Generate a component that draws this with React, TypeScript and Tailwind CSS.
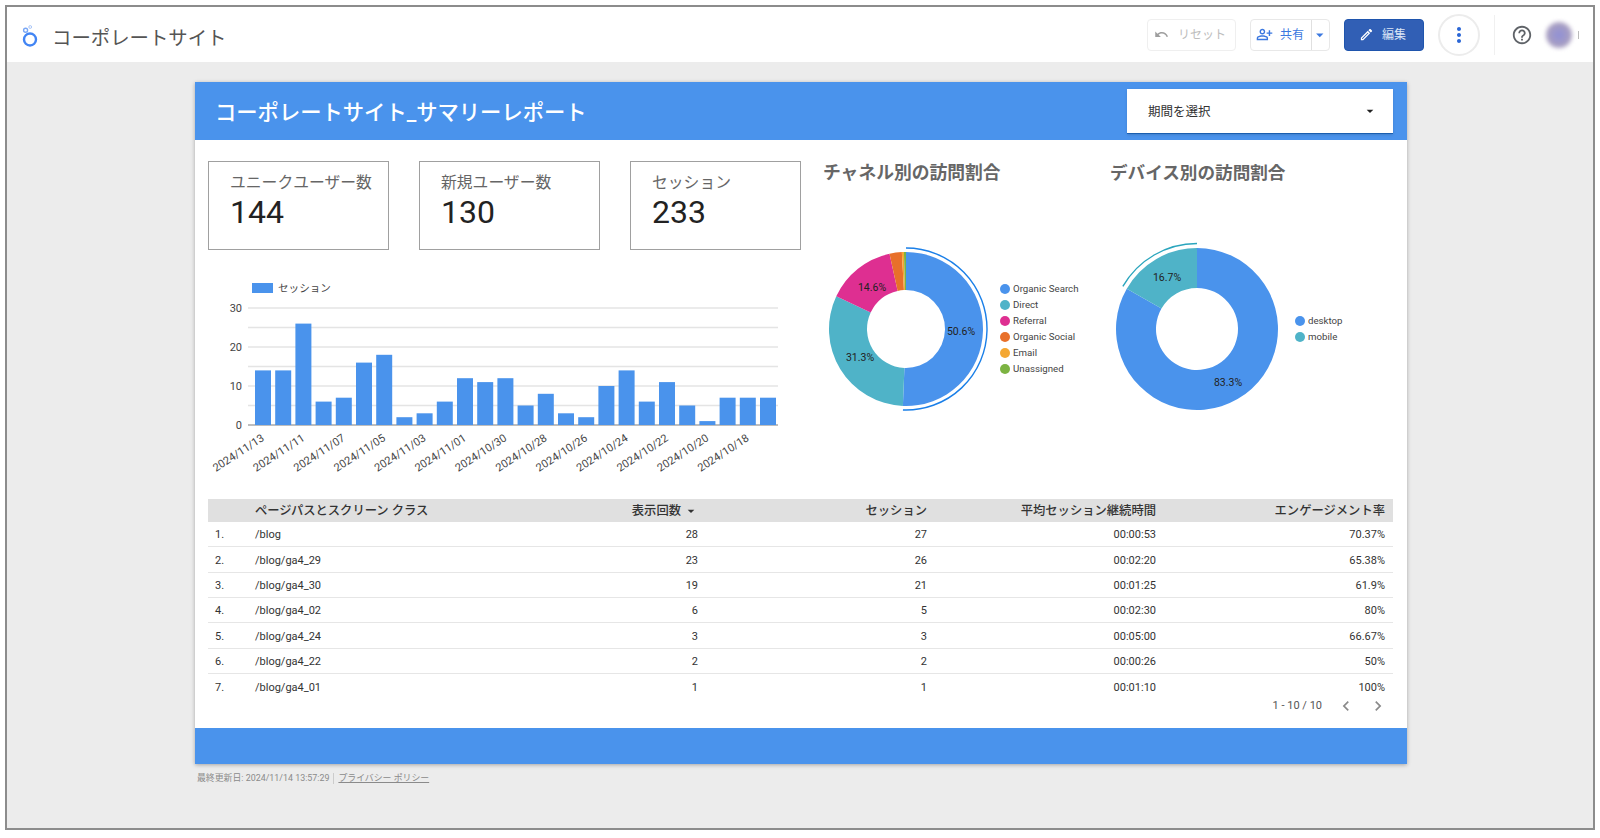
import { MdHelpOutline, MdMoreVert, MdOutlineEdit, MdOutlinePersonAddAlt, MdArrowDropDown, MdChevronLeft, MdChevronRight } from 'react-icons/md';

const BLUE = '#4a93ec';

const bars = [14, 14, 26, 6, 7, 16, 18, 2, 3, 6, 12, 11, 12, 5, 8, 3, 2, 10, 14, 6, 11, 5, 1, 7, 7, 7];
const dates = ['11/13', '11/11', '11/07', '11/05', '11/03', '11/01', '10/30', '10/28', '10/26', '10/24', '10/22', '10/20', '10/18'];

const rows = [
  ['/blog', '28', '27', '00:00:53', '70.37%'],
  ['/blog/ga4_29', '23', '26', '00:02:20', '65.38%'],
  ['/blog/ga4_30', '19', '21', '00:01:25', '61.9%'],
  ['/blog/ga4_02', '6', '5', '00:02:30', '80%'],
  ['/blog/ga4_24', '3', '3', '00:05:00', '66.67%'],
  ['/blog/ga4_22', '2', '2', '00:00:26', '50%'],
  ['/blog/ga4_01', '1', '1', '00:01:10', '100%'],
];

const channels = [
  { name: 'Organic Search', value: 118, color: BLUE },
  { name: 'Direct', value: 73, color: '#4fb3c8' },
  { name: 'Referral', value: 34, color: '#de2f91' },
  { name: 'Organic Social', value: 6, color: '#e8702a' },
  { name: 'Email', value: 1, color: '#f4a732' },
  { name: 'Unassigned', value: 1, color: '#7cb342' },
];

const devices = [
  { name: 'desktop', value: 83.3, color: BLUE },
  { name: 'mobile', value: 16.7, color: '#4fb3c8' },
];

const point = (cx: number, cy: number, r: number, turn: number) => {
  const a = turn * Math.PI * 2;
  return `${cx + r * Math.sin(a)} ${cy - r * Math.cos(a)}`;
};

const sector = (cx: number, cy: number, r: number, inner: number, from: number, to: number) => {
  const large = to - from > 0.5 ? 1 : 0;
  return `M${point(cx, cy, r, from)} A${r} ${r} 0 ${large} 1 ${point(cx, cy, r, to)} L${point(cx, cy, inner, to)} A${inner} ${inner} 0 ${large} 0 ${point(cx, cy, inner, from)} Z`;
};

const arc = (cx: number, cy: number, r: number, from: number, to: number) =>
  `M${point(cx, cy, r, from)} A${r} ${r} 0 ${to - from > 0.5 ? 1 : 0} 1 ${point(cx, cy, r, to)}`;

type Slice = { name: string; value: number; color: string };
type Label = { text: string; x: number; y: number };

const Donut = ({ data, w, cx, r, inner, labels, hover }: { data: Slice[]; w: number; cx: number; r: number; inner: number; labels: Label[]; hover: { r: number; from: number; to: number; color: string } }) => {
  const total = data.reduce((s, d) => s + d.value, 0);
  let run = 0;
  return (
    <svg width={w} height={258} className="shrink-0">
      {data.map((d) => {
        const from = run / total;
        run += d.value;
        return <path key={d.name} d={sector(cx, 129, r, inner, from, run / total)} fill={d.color} />;
      })}
      <path d={arc(cx, 129, hover.r, hover.from, hover.to)} fill="none" stroke={hover.color} strokeWidth={1.4} />
      {labels.map((l) => (
        <text key={l.text} x={l.x} y={l.y} textAnchor="middle" dominantBaseline="central" fontSize={10.5} fill="#222">{l.text}</text>
      ))}
    </svg>
  );
};

const Legend = ({ data }: { data: Slice[] }) => (
  <div className="flex flex-col justify-center">
    {data.map((d) => (
      <div key={d.name} className="flex h-4 items-center gap-[3px] text-[9.7px] text-[#444]">
        <span className="h-[10px] w-[10px] rounded-full" style={{ backgroundColor: d.color }} />
        <span>{d.name}</span>
      </div>
    ))}
  </div>
);

const Kpi = ({ title, value, width }: { title: string; value: string; width: string }) => (
  <div className={`h-[89px] border border-[#a0a0a0] pl-[21px] pt-[9px] ${width}`}>
    <div className="text-[15.8px] leading-[23px] text-[#666]">{title}</div>
    <div className="text-[32px] leading-[36px] text-[#222]">{value}</div>
  </div>
);

const BarChart = () => (
  <svg width={593} height={185} className="block">
    {[0, 1, 2, 3, 4, 5, 6].map((i) => (
      <line key={i} x1={40} x2={570} y1={15 + i * 19.5} y2={15 + i * 19.5} stroke={i === 6 ? '#a8a8a8' : '#e4e4e4'} strokeWidth={1.3} />
    ))}
    {['30', '20', '10', '0'].map((t, i) => (
      <text key={t} x={34} y={15 + i * 39} textAnchor="end" dominantBaseline="central" fontSize={11} fill="#444">{t}</text>
    ))}
    {bars.map((v, i) => (
      <rect key={i} x={47 + i * 20.2} y={132 - v * 3.9} width={16} height={v * 3.9} fill={BLUE} />
    ))}
    {dates.map((d, i) => (
      <text key={d} transform={`translate(${57 + i * 40.4} 147) rotate(-33)`} textAnchor="end" fontSize={11} fill="#444">{`2024/${d}`}</text>
    ))}
  </svg>
);

const App = () => (
  <div className="h-[838px] w-[1600px] overflow-hidden bg-white pl-[5px] pt-[5px] font-['Roboto','Noto_Sans_CJK_JP',sans-serif]">
    <div className="flex h-[825px] w-[1590px] flex-col border-2 border-[#8c8c8c] bg-[#ececec]">
      {/* Top bar */}
      <header className="flex h-[55px] shrink-0 items-center bg-white">
        <svg width="20" height="24" viewBox="0 0 20 24" className="ml-[14px] mt-[2px]">
          <circle cx="9" cy="15.5" r="6" fill="none" stroke="#4285f4" strokeWidth="2.4" />
          <circle cx="4.6" cy="6.2" r="2" fill="none" stroke="#7aa7f5" strokeWidth="1.4" />
          <circle cx="9.2" cy="3" r="1.4" fill="none" stroke="#a9c5f8" strokeWidth="1" />
        </svg>
        <h1 className="ml-[11px] pt-[9px] text-[19.4px] font-normal text-[#555]">コーポレートサイト</h1>

        <div className="ml-auto flex items-center">
          <button className="flex h-8 w-[89px] items-center gap-[9px] rounded border border-[#efefef] pl-[6px] text-xs text-[#bdbdbd]">
            <svg width="15" height="15" viewBox="0 0 24 24" fill="#9e9e9e"><path d="M12.5 8c-2.65 0-5.05.99-6.9 2.6L2 7v9h9l-3.62-3.62c1.39-1.16 3.16-1.88 5.12-1.88 3.54 0 6.55 2.31 7.6 5.5l2.37-.78C21.08 11.03 17.15 8 12.5 8z" /></svg>
            リセット
          </button>
          <div className="ml-[14px] flex h-8 w-[80px] items-center rounded border border-[#e8e8e8] text-xs text-[#3b78e0]">
            <span className="flex h-full w-[63px] items-center gap-[7px] border-r border-[#e0e0e0] pl-[5px]">
              <MdOutlinePersonAddAlt size={17} className="shrink-0" />
              共有
            </span>
            <MdArrowDropDown size={18} className="ml-[-1px]" />
          </div>
          <button className="ml-[14px] flex h-8 w-[80px] items-center gap-[8px] rounded border border-[#1f55ad] bg-[#315fb5] pl-[14px] text-xs text-[#dbe5f5]">
            <MdOutlineEdit size={15} className="text-white" />
            編集
          </button>
          <div className="ml-[14px] flex h-[42px] w-[42px] items-center justify-center rounded-full border-2 border-[#ececec]">
            <MdMoreVert size={24} className="text-[#2a66d6]" />
          </div>
          <span className="ml-[14px] h-[40px] w-px bg-[#f0f0f0]" />
          <MdHelpOutline size={22} className="ml-[16px] text-[#5f6368]" />
          <span className="ml-[13px] h-[26px] w-[26px] rounded-full bg-[radial-gradient(circle,#8f8fd6,#b8a9b5)] blur-[2px]" />
          <span className="ml-[6px] mr-[14px] h-[8px] w-px bg-[#bbb]" />
        </div>
      </header>

      <main className="pl-[188px] pt-[20px]">
        <div className="w-[1212px] bg-white shadow-[0_1px_4px_rgba(0,0,0,0.3)]">
          {/* Report header */}
          <div className="flex h-[58px] items-center justify-between pl-[20px] pr-[14px]" style={{ backgroundColor: BLUE }}>
            <h2 className="pt-[4px] text-[21.3px] font-medium text-white">コーポレートサイト_サマリーレポート</h2>
            <div className="flex h-[45px] w-[266px] items-center justify-between border-b border-[#1a5fb0] bg-white pl-[21px] pr-[15px] text-[12.5px] text-[#333] shadow-sm">
              <span className="pt-[4px]">期間を選択</span>
              <MdArrowDropDown size={16} className="text-[#222]" />
            </div>
          </div>

          {/* Charts */}
          <div className="flex h-[359px] pl-[13px]">
            <div className="w-[593px] pt-[21px]">
              <div className="flex gap-[30px]">
                <Kpi title="ユニークユーザー数" value="144" width="w-[181px]" />
                <Kpi title="新規ユーザー数" value="130" width="w-[181px]" />
                <Kpi title="セッション" value="233" width="w-[171px]" />
              </div>
              <div className="ml-[44px] mt-[33px] flex h-[10px] items-center gap-[5px] text-[10.6px] text-[#444]">
                <span className="h-[10px] w-[21px]" style={{ backgroundColor: BLUE }} />
                <span className="pt-[2px]">セッション</span>
              </div>
              <BarChart />
            </div>

            <div className="ml-[22px] w-[287px] pt-[21px]">
              <h3 className="h-[24px] text-[17.8px] leading-[24px] font-bold text-[#666]">チャネル別の訪問割合</h3>
              <div className="mt-[15px] flex">
                <Donut
                  data={channels}
                  w={177}
                  cx={83}
                  r={77}
                  inner={39}
                  labels={[{ text: '50.6%', x: 138, y: 131 }, { text: '31.3%', x: 37, y: 157 }, { text: '14.6%', x: 49, y: 87 }]}
                  hover={{ r: 81, from: 0, to: 0.506, color: '#1a7fe8' }}
                />
                <Legend data={channels} />
              </div>
            </div>

            <div className="w-[280px] pt-[21px]">
              <h3 className="h-[24px] text-[17.6px] leading-[24px] font-bold text-[#666]">デバイス別の訪問割合</h3>
              <div className="mt-[15px] flex">
                <Donut
                  data={devices}
                  w={185}
                  cx={87}
                  r={81}
                  inner={41}
                  labels={[{ text: '83.3%', x: 118, y: 182 }, { text: '16.7%', x: 57, y: 77 }]}
                  hover={{ r: 85.5, from: 0.833, to: 1, color: '#2aa5bd' }}
                />
                <Legend data={devices} />
              </div>
            </div>
          </div>

          {/* Table */}
          <div className="h-[229px] pl-[13px] pr-[14px]">
            <div className="grid h-[23px] grid-cols-[47px_221px_repeat(4,229px)] items-center bg-[#e0e0e0] pt-[1px] text-[12.3px] font-medium text-[#333]">
              <span />
              <span>ページパスとスクリーン クラス</span>
              <span className="flex items-center justify-end pr-[6px]">
                表示回数
                <MdArrowDropDown size={16} className="ml-[2px]" />
              </span>
              <span className="pr-[7px] text-right">セッション</span>
              <span className="pr-[7px] text-right">平均セッション継続時間</span>
              <span className="pr-[7px] text-right">エンゲージメント率</span>
            </div>
            {rows.map((r, i) => (
              <div key={r[0]} className={`grid h-[25.33px] grid-cols-[47px_221px_repeat(4,229px)] items-center pt-[3px] text-[11px] text-[#333] ${i < 6 ? 'border-b border-[#e6e6e6]' : ''}`}>
                <span className="pl-[7px]">{i + 1}.</span>
                <span>{r[0]}</span>
                {r.slice(1).map((c, j) => (
                  <span key={j} className="pr-[7px] text-right">{c}</span>
                ))}
              </div>
            ))}
            <div className="flex h-[14px] items-center justify-end text-[11px] text-[#555]">
              1 - 10 / 10
              <MdChevronLeft size={20} className="ml-[14px] text-[#8a8a8a]" />
              <MdChevronRight size={20} className="ml-[12px] mr-[5px] text-[#8a8a8a]" />
            </div>
          </div>

          <div className="h-[36px]" style={{ backgroundColor: BLUE }} />
        </div>

        <div className="ml-[2px] mt-[8px] flex items-center text-[8.9px] text-[#8a8a8a]">
          最終更新日: 2024/11/14 13:57:29
          <span className="mx-[4px] h-[11px] w-px bg-[#ccc]" />
          <span className="underline">プライバシー ポリシー</span>
        </div>
      </main>
    </div>
  </div>
);

export default App;
